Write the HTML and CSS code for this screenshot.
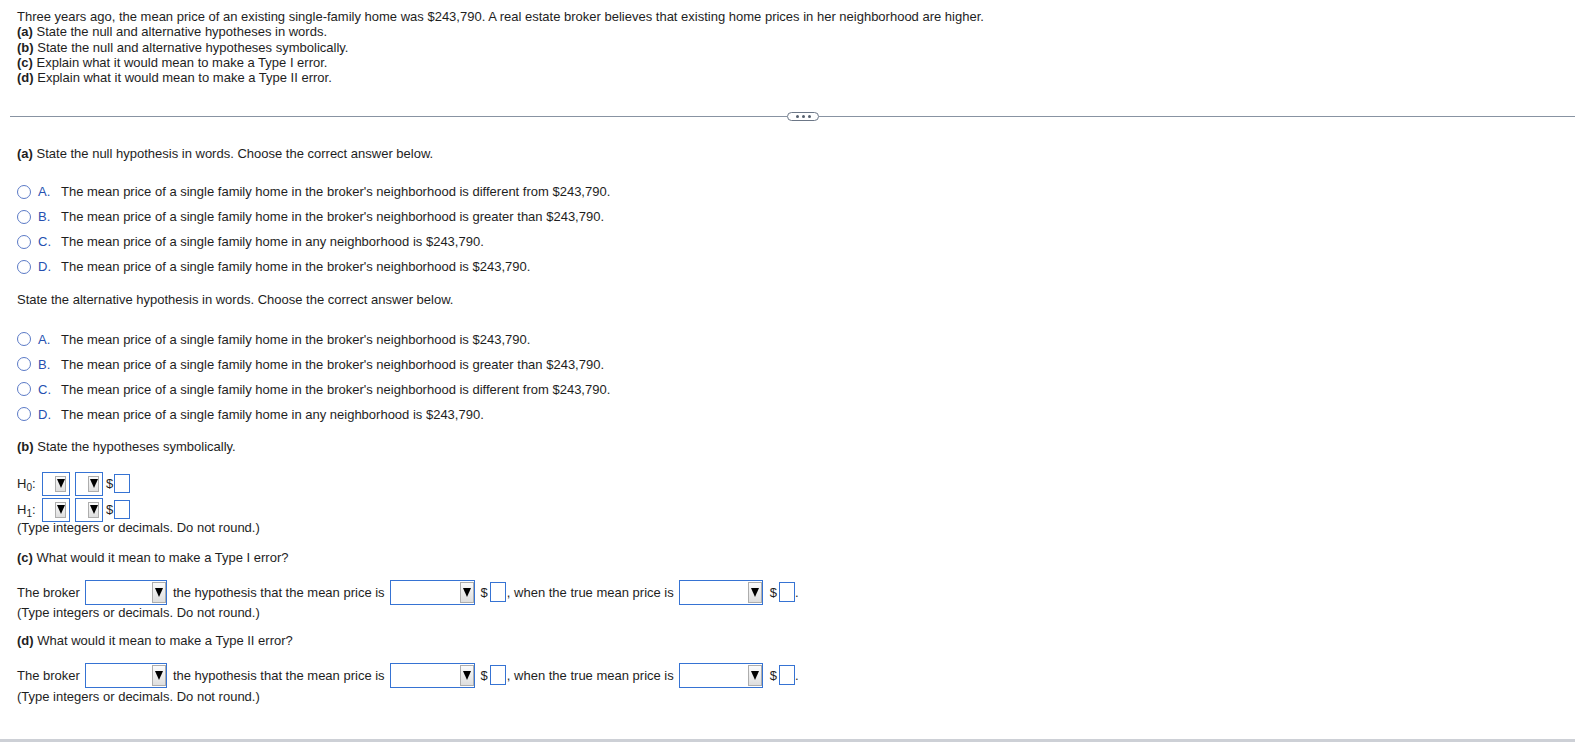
FILE: index.html
```html
<!DOCTYPE html>
<html lang="en">
<head>
<meta charset="utf-8">
<title>Hypothesis testing</title>
<link rel="stylesheet" href="styles.css">
</head>
<body>
<div class="page">
  <div class="content">
    <p class="stem">Three years ago, the mean price of an existing single-family home was $243,790. A real estate broker believes that existing home prices in her neighborhood are higher.<br>
    <b>(a)</b> State the null and alternative hypotheses in words.<br>
    <b>(b)</b> State the null and alternative hypotheses symbolically.<br>
    <b>(c)</b> Explain what it would mean to make a Type I error.<br>
    <b>(d)</b> Explain what it would mean to make a Type II error.</p>

    <div class="divider"><span class="more"><i></i><i></i><i></i></span></div>

    <div class="answer">
      <p class="prompt p-a"><b>(a)</b> State the null hypothesis in words. Choose the correct answer below.</p>
      <ul class="choices c1">
        <li><span class="radio"></span><span class="letter">A.</span><span>The mean price of a single family home in the broker's neighborhood is different from $243,790.</span></li>
        <li><span class="radio"></span><span class="letter">B.</span><span>The mean price of a single family home in the broker's neighborhood is greater than $243,790.</span></li>
        <li><span class="radio"></span><span class="letter">C.</span><span>The mean price of a single family home in any neighborhood is $243,790.</span></li>
        <li><span class="radio"></span><span class="letter">D.</span><span>The mean price of a single family home in the broker's neighborhood is $243,790.</span></li>
      </ul>

      <p class="prompt p-alt">State the alternative hypothesis in words. Choose the correct answer below.</p>
      <ul class="choices c2">
        <li><span class="radio"></span><span class="letter">A.</span><span>The mean price of a single family home in the broker's neighborhood is $243,790.</span></li>
        <li><span class="radio"></span><span class="letter">B.</span><span>The mean price of a single family home in the broker's neighborhood is greater than $243,790.</span></li>
        <li><span class="radio"></span><span class="letter">C.</span><span>The mean price of a single family home in the broker's neighborhood is different from $243,790.</span></li>
        <li><span class="radio"></span><span class="letter">D.</span><span>The mean price of a single family home in any neighborhood is $243,790.</span></li>
      </ul>

      <p class="prompt p-b"><b>(b)</b> State the hypotheses symbolically.</p>
      <div class="hyp">
        <div class="hrow">
          <span class="hlabel">H<sub>0</sub>:</span>
          <span class="select sm"><span class="arrow"></span></span>
          <span class="select sm second"><span class="arrow"></span></span>
          <span class="dollar">$</span><span class="box"></span>
        </div>
        <div class="hrow">
          <span class="hlabel">H<sub>1</sub>:</span>
          <span class="select sm"><span class="arrow"></span></span>
          <span class="select sm second"><span class="arrow"></span></span>
          <span class="dollar">$</span><span class="box"></span>
        </div>
      </div>
      <p class="note n-b">(Type integers or decimals. Do not round.)</p>

      <p class="prompt p-c"><b>(c)</b> What would it mean to make a Type I error?</p>
      <div class="fill f-c">
        <span>The broker</span>
        <span class="select w1"><span class="arrow"></span></span>
        <span class="t2">the hypothesis that the mean price is</span>
        <span class="select w2"><span class="arrow"></span></span>
        <span class="dollar d2">$</span><span class="box bx"></span>
        <span class="t3">, when the true mean price is</span>
        <span class="select w3"><span class="arrow"></span></span>
        <span class="dollar d3">$</span><span class="box bx"></span><span>.</span>
      </div>
      <p class="note n-c">(Type integers or decimals. Do not round.)</p>

      <p class="prompt p-d"><b>(d)</b> What would it mean to make a Type II error?</p>
      <div class="fill f-d">
        <span>The broker</span>
        <span class="select w1"><span class="arrow"></span></span>
        <span class="t2">the hypothesis that the mean price is</span>
        <span class="select w2"><span class="arrow"></span></span>
        <span class="dollar d2">$</span><span class="box bx"></span>
        <span class="t3">, when the true mean price is</span>
        <span class="select w3"><span class="arrow"></span></span>
        <span class="dollar d3">$</span><span class="box bx"></span><span>.</span>
      </div>
      <p class="note n-d">(Type integers or decimals. Do not round.)</p>
    </div>
  </div>
  <div class="bar"></div>
</div>
</body>
</html>
```

FILE: styles.css
```css
* { box-sizing: border-box; }
html, body { margin: 0; padding: 0; }
body {
  font-family: "Liberation Sans", Arial, sans-serif;
  font-size: 13px;
  color: #1e1e1e;
  background: #fff;
}
.page { min-height: 100vh; display: flex; flex-direction: column; }
.content { flex: 1; }

.stem { margin: 0; padding: 9px 0 0 17px; line-height: 15.3px; }

.divider { margin: 27px 0 0 10px; height: 9px; display: flex; align-items: center; }
.divider::before { content: ""; width: 777px; height: 1px; background: #8893a2; }
.divider::after { content: ""; flex: 1; height: 1px; background: #8893a2; }
.more {
  width: 32px; height: 9px; border: 1px solid #6c7787; border-radius: 5px;
  display: flex; align-items: center; justify-content: center; gap: 3px; background: #fff;
}
.more i { width: 3px; height: 3px; background: #555f6e; border-radius: 50%; }

.answer { padding-left: 17px; }
.prompt { margin: 0; line-height: 15px; }
.p-a { margin-top: 25px; }
.p-alt { margin-top: 13px; }
.p-b { margin-top: 12.5px; }
.p-c { margin-top: 15px; }
.p-d { margin-top: 13px; }

.choices { list-style: none; margin: 0; padding: 0; }
.c1 { margin-top: 18px; }
.c2 { margin-top: 19.5px; }
.choices li { height: 25px; display: flex; align-items: center; }
.radio {
  width: 14px; height: 14px; border: 1px solid #5b7ac6; border-radius: 50%;
  margin-left: 0; margin-right: 7px; flex: none;
}
.letter { color: #2650b0; width: 23px; flex: none; }

.hyp { margin-top: 16.5px; }
.hrow { height: 26px; display: flex; align-items: center; }
.hlabel { width: 25px; flex: none; }
.hlabel sub { font-size: 10px; vertical-align: -3px; line-height: 0; }

.select {
  display: inline-flex; justify-content: flex-end; align-items: center;
  border: 1px solid #3673d3; background: #fff; flex: none;
}
.arrow {
  display: flex; align-items: center; justify-content: center;
  border: 1px solid #adadad; background: linear-gradient(#fbfbfb, #dedede);
}
.arrow::after {
  content: ""; border-left: 4px solid transparent; border-right: 4px solid transparent;
  border-top: 9px solid #000;
}
.select.sm { width: 28px; height: 24px; padding-right: 3px; }
.select.sm .arrow { width: 11px; height: 16px; }
.select.second { margin-left: 5px; }

.dollar { flex: none; }
.hrow .dollar { margin-left: 3px; margin-right: 1px; }
.box { width: 16px; height: 19px; border: 1px solid #3673d3; flex: none; background: #fff; }

.note { margin: 0; line-height: 15px; }
.n-b { margin-top: -2.5px; }
.n-c { margin-top: 0.5px; }
.n-d { margin-top: 1.5px; }

.fill { display: flex; align-items: center; height: 25px; }
.f-c { margin-top: 14.5px; }
.f-d { margin-top: 14.5px; }
.fill .select { height: 25px; padding-right: 0; }
.fill .select .arrow { width: 14px; height: 21px; }
.w1 { width: 82px; margin-left: 5px; }
.t2 { margin-left: 6px; }
.w2 { width: 85px; margin-left: 5px; }
.d2 { margin-left: 6px; margin-right: 2px; }
.bx { height: 20px; }
.t3 { margin-left: 1px; }
.w3 { width: 84px; margin-left: 5px; }
.d3 { margin-left: 7px; margin-right: 2px; }

.bar { height: 3px; background: #cdd0d6; flex: none; }
```
